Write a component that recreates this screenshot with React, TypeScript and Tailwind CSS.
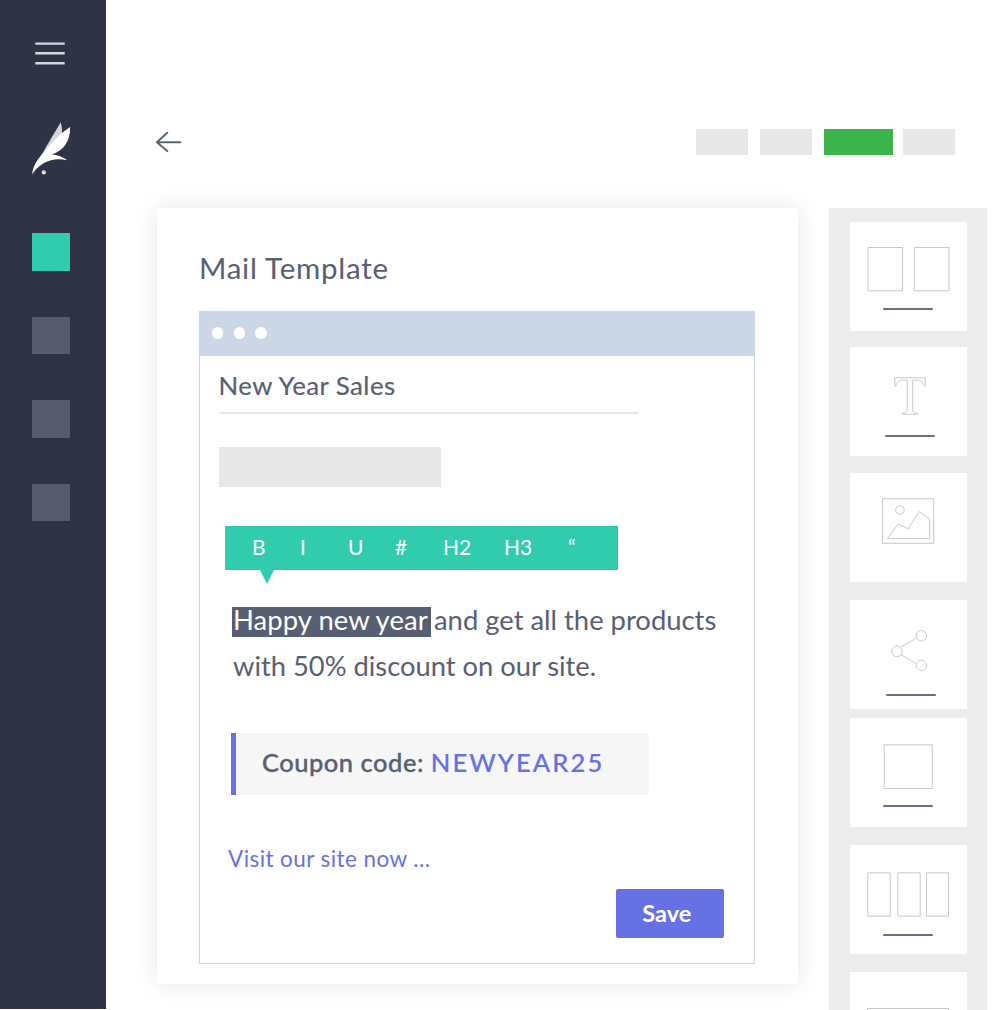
import type { ReactNode } from "react";

function Feather() {
  return (
    <svg className="block h-[54px] w-[40px]" viewBox="31 122 40 54" fill="none">
      <path d="M60.7 122.2C62.2 127 62.3 131 61.8 135.2C54 141 48 147.5 40.2 158C45.5 147 54 134 60.7 122.2Z" fill="#d5d6da" />
      <path d="M70.1 127C70.4 141.5 63.5 150.5 51.9 154.6C57.3 155 63 157 67.3 160.3C53.5 156.8 40.5 161.5 32.2 174.3C32.5 166.5 38 159 42.5 153.8C50 145 58.5 134.5 70.1 127Z" fill="#fff" />
      <circle cx="43.8" cy="172.4" r="2.1" fill="#dfe1e4" />
    </svg>
  );
}

function Underline({ className }: { className: string }) {
  return <div className={`h-[2px] w-[50px] rounded-full bg-[#667085] ${className}`} />;
}

function Tile({ className = "", children }: { className?: string; children: ReactNode }) {
  return <div className={`ml-[21px] h-[109px] w-[117px] shrink-0 overflow-hidden bg-white ${className}`}>{children}</div>;
}

const stroke = { fill: "none", stroke: "#c9c9c9", strokeWidth: 1 };

export default function App() {
  return (
    <div className="flex h-[1010px] w-[998px] overflow-hidden bg-white font-['Lato',sans-serif] text-[#576073]">
      <aside className="h-[1009px] w-[106px] shrink-0 bg-[#2e3446] pl-[32px] pt-[42px]">
        <svg className="ml-[3px] block h-[23px] w-[30px]" viewBox="0 0 30 23" stroke="#d5d8dd" strokeWidth="2.4">
          <path d="M0.3 1.6H29.7M0.3 11.2H29.7M0.3 21.3H29.7" />
        </svg>
        <div className="-ml-px mt-[57px]"><Feather /></div>
        <div className="mt-[57px] flex flex-col gap-[46px]">
          <div className="h-[37.6px] w-[38px] bg-[#31ccad]" />
          <div className="h-[37.6px] w-[38px] bg-[#575c6d]" />
          <div className="h-[37.6px] w-[38px] bg-[#575c6d]" />
          <div className="h-[37.6px] w-[38px] bg-[#575c6d]" />
        </div>
      </aside>

      <main className="flex min-w-0 flex-1 flex-col">
        <header className="flex h-[208px] shrink-0 items-start pl-[49px] pt-[129px]">
          <svg className="mt-[2px] h-[22px] w-[28px]" viewBox="155 131 28 22" fill="none" stroke="#5b6479" strokeWidth="2" strokeLinecap="round" strokeLinejoin="round">
            <path d="M180.4 142.2H157M167.3 132.8L156.9 142.2L167.3 151" />
          </svg>
          <div className="ml-[513px] flex h-[26px]">
            <div className="w-[52px] bg-[#e7e7e7]" />
            <div className="ml-[12px] w-[52px] bg-[#e7e7e7]" />
            <div className="ml-[12px] w-[69px] bg-[#3bb54a]" />
            <div className="ml-[10px] w-[52px] bg-[#e7e7e7]" />
          </div>
        </header>

        <div className="flex min-h-0 flex-1 items-start pl-[51px]">
          <section className="h-[776px] w-[641px] shrink-0 bg-white pl-[42px] shadow-[0_0_22px_rgba(0,0,0,0.10)]">
            <h1 className="h-[103px] whitespace-nowrap pt-[40px] text-[29.5px] leading-[40px] tracking-[0.75px]">Mail Template</h1>
            <div className="h-[653px] w-[556px] border border-[#cbd6e5] bg-white">
              <div className="flex h-[44px] items-center gap-[10.3px] bg-[#cbd6e6] pb-[2px] pl-[12px]">
                <div className="size-[11.4px] rounded-full bg-white" />
                <div className="size-[11.4px] rounded-full bg-white" />
                <div className="size-[11.4px] rounded-full bg-white" />
              </div>
              <div className="ml-[18.5px] h-[58px] w-[419.5px] whitespace-nowrap border-b-2 border-[#e2e7f1] pt-[13px] text-[25.8px] leading-[32px] tracking-[0.45px] [-webkit-text-stroke:0.2px_#576073]">New Year Sales</div>
              <div className="ml-[19px] mt-[33px] h-[40px] w-[222px] bg-[#e7e7e7]" />

              <div className="ml-[25px] mt-[39px] grid h-[44px] w-[393px] grid-cols-[48px_48px_47px_48px_61px_64px_49px] items-start whitespace-nowrap bg-[#31ccad] pl-[27px] text-[21px] leading-[42px] text-white">
                <span>B</span><span>I</span><span>U</span><span>#</span><span>H2</span><span>H3</span><span>“</span>
              </div>
              <svg className="ml-[60px] block h-[14px] w-[14px]" viewBox="0 0 14 14"><path d="M0 0H14L7 14Z" fill="#31ccad" /></svg>

              <div className="ml-[32px] mt-[23px] h-[91px] whitespace-nowrap text-[27.4px]">
                <div className="flex h-[46px] items-start">
                  <span className="h-[30px] w-[199px] bg-[#576073] pl-px leading-[25px] tracking-[0.08px] text-white">Happy new year</span>
                  <span className="ml-[3px] leading-[25px]">and get all the products</span>
                </div>
                <p className="pl-px text-[27.3px] leading-[25px]">with 50% discount on our site.</p>
              </div>

              <div className="ml-[31px] mt-[35px] flex h-[62px] w-[418px] items-center whitespace-nowrap border-l-[5px] border-[#6672e4] bg-[#f6f6f6] pb-[3px] pl-[26px] text-[25.5px] font-medium leading-[59px]">
                <span className="tracking-[0.5px] [-webkit-text-stroke:0.35px_#576073]">Coupon code:</span>
                <span className="ml-[7px] tracking-[2.1px] text-[#6672e4] [-webkit-text-stroke:0.2px_#6672e4]">NEWYEAR25</span>
              </div>
              <a className="ml-[28px] mt-[48px] block h-[31px] whitespace-nowrap text-[22.5px] leading-[32px] tracking-[0.42px] text-[#6672e4]">Visit our site now ...</a>
              <button className="ml-[416px] mt-[15px] flex h-[48.5px] w-[107.5px] justify-center rounded-[2px] bg-[#6672e4] pr-[6px] text-[23.5px] font-bold leading-[48px] text-white">Save</button>
            </div>
          </section>

          <aside className="ml-[31px] flex h-[802px] w-[158px] shrink-0 flex-col overflow-hidden bg-[#ececec] pt-[14px]">
            <Tile>
              <svg className="block h-[86px] w-full" viewBox="850 222 117 86" {...stroke}>
                <path d="M868 247.5H902.5V290.8H868ZM914.3 247.5H949V290.8H914.3Z" />
              </svg>
              <Underline className="ml-[33px]" />
            </Tile>
            <Tile className="mt-[16px]">
              <svg className="block h-[88px] w-full" viewBox="850 347 117 88" {...stroke}>
                <path d="M894.8 377.8H925.2V386.2H924.2C923.5 382.3 921 380.2 917.5 380.2H912.7V409.5C912.7 412 914 413.2 917.8 413.2V414.2H902.2V413.2C906 413.2 907.3 412 907.3 409.5V380.2H902.5C899 380.2 896.5 382.3 895.8 386.2H894.8Z" />
              </svg>
              <Underline className="ml-[35px]" />
            </Tile>
            <Tile className="mt-[17px]">
              <svg className="block h-[109px] w-full" viewBox="850 473 117 109" {...stroke}>
                <rect x="882.5" y="498.8" width="51.2" height="44.5" />
                <circle cx="899.9" cy="510" r="4.3" />
                <path d="M887.5 538.6L898.2 524L908.2 528.9L919.4 511.5L929.6 519V538.6Z" />
              </svg>
            </Tile>
            <Tile className="mt-[18px]">
              <svg className="block h-[94px] w-full" viewBox="850 600 117 94" {...stroke}>
                <circle cx="896.9" cy="651.4" r="5.3" /><circle cx="921.4" cy="635.8" r="5.3" /><circle cx="921.4" cy="665.4" r="5.3" />
                <path d="M900.5 647.1L916.5 638M901 654.8L916.5 663.6" />
              </svg>
              <Underline className="ml-[36px]" />
            </Tile>
            <Tile className="mt-[9px]">
              <svg className="block h-[87px] w-full" viewBox="850 718 117 87" {...stroke}>
                <rect x="884.2" y="744.8" width="48" height="43.7" />
              </svg>
              <Underline className="ml-[33px]" />
            </Tile>
            <Tile className="mt-[18px]">
              <svg className="block h-[89px] w-full" viewBox="850 845 117 89" {...stroke}>
                <path d="M867.8 872.8H890.2V916.2H867.8ZM897.8 872.8H920.2V916.2H897.8ZM926.5 872.8H948.5V916.2H926.5Z" />
              </svg>
              <Underline className="ml-[33px]" />
            </Tile>
            <Tile className="mt-[18px]">
              <svg className="block h-[60px] w-full" viewBox="850 972 117 60" {...stroke}>
                <rect x="867.5" y="1008.5" width="81" height="43" />
              </svg>
            </Tile>
          </aside>
        </div>
      </main>
    </div>
  );
}
